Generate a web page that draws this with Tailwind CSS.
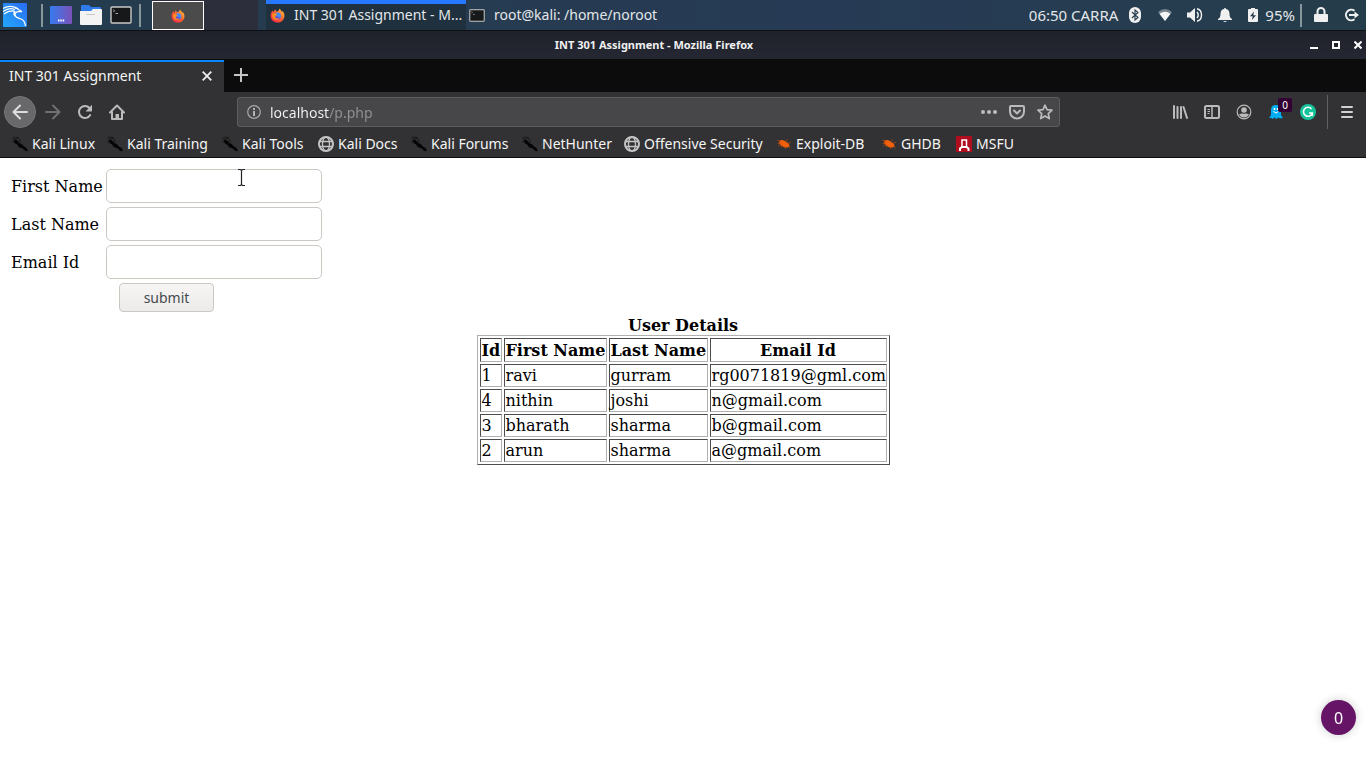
<!DOCTYPE html>
<html lang="en">
<head>
<meta charset="utf-8">
<meta name="viewport" content="width=device-width, initial-scale=1">
<title>INT 301 Assignment</title>
<script src="https://cdn.jsdelivr.net/npm/@tailwindcss/browser@4"></script>
</head>
<body class="relative flex min-h-screen flex-col bg-white font-['Noto_Sans',sans-serif] text-sm">

<svg class="absolute size-0" aria-hidden="true">
  <defs>
    <linearGradient id="fire" x1="0" y1="1" x2="1" y2="0"><stop offset="0" stop-color="#f0204e"/><stop offset=".5" stop-color="#ff5a30"/><stop offset="1" stop-color="#ffd83a"/></linearGradient>
    <linearGradient id="desk" x1="0" y1="0" x2="1" y2="0"><stop offset="0" stop-color="#367bf0"/><stop offset="1" stop-color="#7a52b8"/></linearGradient>
    <linearGradient id="kali" x1="0" y1="1" x2="1" y2="0"><stop offset="0" stop-color="#22a8fa"/><stop offset="1" stop-color="#2a6cf2"/></linearGradient>
    <symbol id="firefox" viewBox="0 0 16 16">
      <path fill="url(#fire)" d="M2.6 2.6 4 4.2 5.3 1.4 7 3.8l2-.6L10.200.6l1.700 2 1 2 .4-1.600C15 5 15.600 7 15.400 9c-.5 4-3.700 6.500-7.400 6.500C4 15.500.7 12.600.6 8.500.5 6 1.500 4.300 2.600 2.600Z"/>
      <circle cx="8" cy="8.600" r="3.700" fill="#3f8cf5"/>
      <path fill="#7047c9" d="M6 8.500c2 .3 2.400 1.500 5 1.500-1 2-4.300 2.500-5.700 1Z"/>
      <path fill="#ff8a20" d="M2.500 6C5 5 6.500 6 7.800 6.800 6.300 7.300 7 8.700 5 9.300c1 1.800 3 2.300 5 1.500-1.500 2.600-7 2.400-7.700-1.800Z"/>
    </symbol>
    <symbol id="dragon" viewBox="0 0 16 16">
      <path fill="#050505" d="M2 3.500 5 4.200l2.500 3 2.200.8 2.100 2.200 2.400 1.600 1.500 2.200-.2 1.300-2.500-.5-2.300-2.300L7 11.200 5 8.600 2.200 6.800Z"/>
      <path fill="none" stroke="#141414" stroke-width=".8" d="M0 2.200 4 1l3 1M1 4l5-2M6 2l2.500 2.500M0 5.500l3 1M7 4l1.500 3"/>
    </symbol>
    <symbol id="globe" viewBox="0 0 16 16">
      <g fill="none" stroke="#c4c4c5"><circle cx="8" cy="8" r="7" stroke-width="2"/><ellipse cx="8" cy="8" rx="3.500" ry="7" stroke-width="1.300"/><path stroke-width="1.300" d="M1 5.500h14M1 10.500h14"/></g>
    </symbol>
    <symbol id="bug" viewBox="0 0 16 16">
      <path fill="#f2600c" d="M3.500 4.500C6 3 9 4.500 11 6.500l2 1.500.5 2.500-2 1L8 11.300 5 9.500 3 7.200Z"/>
      <path stroke="#b84a10" stroke-width=".7" fill="none" d="M1 4l4 2M1.500 7.500 5 7M5 11l2-2M10 5l2-1.500M12 7l3-.5M9 11l1 2M12.500 10.500l2 1.500M2 10l3-1.500"/>
    </symbol>
    <symbol id="term" viewBox="0 0 22 18">
      <rect x="1" y="1" width="20" height="16" rx="1" fill="#171819" stroke="#c8c8c8" stroke-width="1.400"/>
      <path fill="none" stroke="#bbb" stroke-width=".9" d="m3.500 3.500 1 1.500-1 1M5.500 7.500H8"/>
    </symbol>
  </defs>
</svg>

<header class="flex h-[31px] items-center border-b border-[#0e1014] bg-[linear-gradient(90deg,#243c4d,#263c50_30%,#263a55_60%,#263d50_85%,#253c4a)] text-[#e3e7e9]">
  <button aria-label="Applications" class="ml-[3px] size-6">
    <svg viewBox="0 0 24 24" class="size-6"><rect width="24" height="24" rx="1" fill="url(#kali)"/><path fill="none" stroke="#fff" stroke-width="1.300" d="M0 5.500C5 2.500 9 2.500 14 5M0 8.500c4-3 8-3.500 12-2M1 11c3-2.500 6-3.500 10-3M12 5c2 0 3 .5 4 2l3 1.500-2-.2c-3 0-5 .5-5 3.200 0 3 3 3.500 6 4.500 3 1 4 3.500 4.500 7M12 8c-3 4 1 6 4 7.500"/></svg>
  </button>
  <span class="ml-3.5 h-[23px] w-0.5 bg-[#87959d]"></span>
  <button aria-label="Show desktop" class="ml-[7px]"><svg viewBox="0 0 22 18" class="h-[18px] w-[22px]"><rect width="22" height="18" rx="1" fill="url(#desk)"/><path stroke="#fff" stroke-width="2" stroke-dasharray="1.500 .8" d="M8 14.500h7"/></svg></button>
  <button aria-label="Files" class="ml-2"><svg viewBox="0 0 22 20" class="h-5 w-[22px]"><path fill="#2f7bec" d="M1 10V1q0-1 1-1h7l2 2h9q1 0 1 1v7Z"/><path fill="#f3f3f3" d="M0 6h11l2-2h8q1 0 1 1v14q0 1-1 1H1q-1 0-1-1Z"/><path stroke="#c8c8c8" d="M6 9.500h9"/></svg></button>
  <button aria-label="Terminal" class="ml-2"><svg class="h-[18px] w-[22px]"><use href="#term"/></svg></button>
  <span class="ml-[7px] h-[23px] w-0.5 bg-[#87959d]"></span>
  <div class="ml-[11px] flex h-full w-[106px] bg-[#2c2e3b]">
    <button aria-label="Workspace 1" class="mt-px flex h-[29px] w-[52px] items-center justify-center border border-white bg-[#4b4b4b]"><svg class="size-3.5"><use href="#firefox"/></svg></button>
  </div>
  <button class="ml-2 flex h-full w-[200px] items-center gap-[9px] border-t-4 border-[#2777ff] bg-[#1f303e] pb-1 pl-1">
    <svg class="size-[15px] shrink-0"><use href="#firefox"/></svg><span class="whitespace-nowrap">INT 301 Assignment - M...</span>
  </button>
  <button class="ml-[3px] flex items-center gap-[9px]">
    <svg class="h-[13px] w-4"><use href="#term"/></svg><span class="whitespace-nowrap">root@kali: /home/noroot</span>
  </button>
  <div class="ml-auto flex items-center pr-[7px]">
    <span class="text-[15px] leading-5 whitespace-nowrap">06:50 CARRA</span>
    <svg viewBox="0 0 12 16" class="ml-[11px] h-4 w-3"><rect width="12" height="16" rx="6" fill="#f0f0f0"/><path fill="none" stroke="#24394a" stroke-width="1.100" d="m3 5 6 5.500L6 13V3l3 2.500L3 11"/></svg>
    <svg viewBox="0 0 14 12" class="ml-[17px] h-3 w-3.5"><path fill="#75838d" d="M0 3q7-6 14 0L7 12Z"/><path fill="#f5f5f5" d="M1.500 4.800q5.500-4 11 0L7 12Z"/></svg>
    <svg viewBox="0 0 16 14" class="ml-[15px] h-3.5 w-4"><path fill="#f0f0f0" d="M0 4.500h3L8 0v14L3 9.500H0Z"/><path fill="none" stroke="#f0f0f0" stroke-width="1.400" d="M10 4q2.500 3 0 6M10 .8q4.500 1 4.500 6.200t-4.500 6.200"/></svg>
    <svg viewBox="0 0 14 14" class="ml-[15px] size-3.5"><path fill="#f0f0f0" d="M7 0q1 0 1 1 3.500.5 3.500 5 0 4 2.500 5v1H0v-1q2.500-1 2.500-5Q2.500 1.500 6 1q0-1 1-1ZM5 13h4q-2 2-4 0Z"/></svg>
    <svg viewBox="0 0 10 14" class="ml-4 h-3.5 w-2.5"><path fill="#f0f0f0" d="M0 2q0-1 1-1h2V0h4v1h2q1 0 1 1v11q0 1-1 1H1q-1 0-1-1Z"/><path fill="#24394a" d="m6 3.500-4 4.700h2.700L4 12l4-4.700H5.300Z"/></svg>
    <span class="ml-[7px] text-[15px] leading-5">95%</span>
    <span class="ml-[5px] h-[23px] w-0.5 bg-[#87959d]"></span>
    <button aria-label="Lock screen" class="ml-3"><svg viewBox="0 0 14 16" class="h-4 w-3.5"><path fill="#f0f0f0" d="M1 7h12q1 0 1 1v6q0 1-1 1H1q-1 0-1-1V8q0-1 1-1Z"/><path fill="none" stroke="#f0f0f0" stroke-width="2" d="M3.500 8V4.500a3.500 3.500 0 0 1 7 0V8"/></svg></button>
    <button aria-label="Log out" class="ml-4"><svg viewBox="0 0 15 14" class="h-3.5 w-[15px]"><path fill="none" stroke="#f0f0f0" stroke-width="2" d="M10.500 2.800a5.300 5.300 0 1 0 0 8.400M5 7h7"/><path fill="#f0f0f0" d="m10.500 3.500 4.500 3.500-4.500 3.500Z"/></svg></button>
  </div>
</header>

<div class="grid h-7 grid-cols-[1fr_auto_1fr] items-center bg-[linear-gradient(#1f222b,#252832)] text-[#f0f0f0]">
  <span></span>
  <h1 class="mr-[58px] text-[11px] font-bold whitespace-nowrap">INT 301 Assignment - Mozilla Firefox</h1>
  <div class="flex items-center justify-end gap-3.5 pr-1">
    <button aria-label="Minimize"><svg viewBox="0 0 8 8" class="size-2"><path fill="#fff" d="M0 6h8v2H0z"/></svg></button>
    <button aria-label="Maximize"><svg viewBox="0 0 8 8" class="size-2"><path fill="none" stroke="#fff" stroke-width="2" d="M1 1h6v6H1z"/></svg></button>
    <button aria-label="Close window"><svg viewBox="0 0 8 8" class="size-2"><path stroke="#fff" stroke-width="2" d="m.5.5 7 7m0-7-7 7"/></svg></button>
  </div>
</div>

<div class="flex h-[33px] bg-[#0c0c0d] text-[#f5f5f5]">
  <div class="mt-px flex w-56 items-center justify-between border-t-2 border-[#0a84ff] bg-[#323234] pr-3 pb-0.5 pl-[9px]">
    <span>INT 301 Assignment</span>
    <button aria-label="Close tab"><svg viewBox="0 0 10 10" class="size-2.5"><path stroke="#eee" stroke-width="1.800" d="m.7.7 8.600 8.600m0-8.600L.7 9.300"/></svg></button>
  </div>
  <button aria-label="New tab" class="ml-2.5 pb-0.5"><svg viewBox="0 0 14 14" class="size-3.5"><path stroke="#c6c6c7" stroke-width="2" d="M7 0v14M0 7h14"/></svg></button>
</div>

<nav class="flex h-10 items-center bg-[#323234] text-[#bbbbbc]" aria-label="Navigation">
  <button aria-label="Back" class="ml-1 flex size-8 items-center justify-center rounded-full border border-[#767677] bg-[#68686a]"><svg viewBox="0 0 16 16" class="size-4"><path fill="none" stroke="#dddddd" stroke-width="2" stroke-linecap="round" stroke-linejoin="round" d="M15 8H2m6-6.500L1.500 8 8 14.500"/></svg></button>
  <button aria-label="Forward" class="ml-[9px]"><svg viewBox="0 0 16 16" class="size-4"><path fill="none" stroke="#707071" stroke-width="2" stroke-linecap="round" stroke-linejoin="round" d="M1 8h13M8 1.500 14.500 8 8 14.500"/></svg></button>
  <button aria-label="Reload" class="ml-4"><svg viewBox="0 0 16 16" class="size-4"><path fill="none" stroke="currentColor" stroke-width="2" stroke-linecap="round" d="M12.500 4A6 6 0 1 0 13.200 11"/><path fill="currentColor" d="M15 .8v6q0 .7-.7.7H8.500Z"/></svg></button>
  <button aria-label="Home" class="ml-4"><svg viewBox="0 0 16 16" class="size-4"><path fill="none" stroke="currentColor" stroke-width="2" stroke-linecap="round" stroke-linejoin="round" d="M1 8.500 8 1.500l7 7M3 7.500V15h10V7.500"/><path fill="currentColor" d="M6.500 15v-5h3.500v5Z"/></svg></button>
  <div class="ml-28 flex h-[30px] w-[823px] min-w-0 items-center rounded-[3px] border border-[#5d5d5f] bg-[#474749] pr-1.5 pl-[9px]">
    <svg viewBox="0 0 14 14" class="size-3.5 shrink-0"><circle cx="7" cy="7" r="6.300" fill="none" stroke="#a9a9aa" stroke-width="1.200"/><path fill="#b3b3b4" d="M6 3h2v2H6zM6 6h2v5H6z"/></svg>
    <input aria-label="Address" type="text" value="localhost/p.php" class="ml-[9px] min-w-0 flex-1 bg-[linear-gradient(90deg,#f5f5f5_59px,#929293_59px)] bg-clip-text pt-0.5 text-transparent outline-none">
    <button aria-label="Page actions"><svg viewBox="0 0 16 16" class="size-4" fill="currentColor"><circle cx="2" cy="8" r="2"/><circle cx="8" cy="8" r="2"/><circle cx="14" cy="8" r="2"/></svg></button>
    <button aria-label="Save to Pocket" class="ml-3"><svg viewBox="0 0 16 16" class="size-4"><path fill="none" stroke="currentColor" stroke-width="2" stroke-linejoin="round" d="M2 2h12q1 0 1 1v4.500a7 7 0 0 1-14 0V3q0-1 1-1Z"/><path fill="none" stroke="currentColor" stroke-width="2" stroke-linecap="round" stroke-linejoin="round" d="m5 6.500 3 3 3-3"/></svg></button>
    <button aria-label="Bookmark this page" class="ml-3"><svg viewBox="0 0 16 16" class="size-4"><path fill="none" stroke="currentColor" stroke-width="1.700" stroke-linejoin="round" d="m8 1.200 2 4.500 5 .5-3.700 3.400 1 5L8 12l-4.300 2.600 1-5L1 6.200l5-.5Z"/></svg></button>
  </div>
  <div class="ml-auto flex h-full items-center">
    <button aria-label="Library"><svg viewBox="0 0 16 16" class="size-4"><path fill="none" stroke="currentColor" stroke-width="2" stroke-linecap="round" d="M2 2v12M5.500 3v11M9 3v11M11.500 3 15 14" /></svg></button>
    <button aria-label="Sidebars" class="ml-4"><svg viewBox="0 0 16 16" class="size-4"><rect x="1" y="2" width="14" height="12" rx="1.500" fill="none" stroke="currentColor" stroke-width="2"/><path stroke="currentColor" stroke-width="1.500" d="M8 2v12"/><path stroke="currentColor" d="M3.500 5.500H6M3.500 7.500H6M3.500 9.500H5.500"/></svg></button>
    <button aria-label="Account" class="ml-4"><svg viewBox="0 0 16 16" class="size-4"><circle cx="8" cy="8" r="6.800" fill="none" stroke="currentColor" stroke-width="1.200"/><circle cx="8" cy="6" r="2.800" fill="currentColor"/><path fill="currentColor" d="M3 10q2 .3 3-.7 2 1 4 0 1 1 3 .7-1.500 3.500-5 3.500T3 10Z"/></svg></button>
    <button aria-label="Ghostery" class="relative ml-4"><svg viewBox="0 0 16 16" class="size-4"><path fill="#00aef0" d="M3 6q0-5 5-5t5 5v5l2 3-3 .5-1.500-1L8.500 15l-2-1.500-2 1.500-1-1-2.500 0 2-3Z"/><circle cx="6.500" cy="5" r="1" fill="#fff"/><circle cx="9.700" cy="5" r="1" fill="#fff"/><path fill="none" stroke="#fff" d="M5.500 7.500q2.500 3 5 0"/></svg><span class="absolute -top-1.5 left-2.5 h-3.5 w-3.5 rounded-[2px] bg-[#330033] text-center text-[10px] leading-[14px] text-white">0</span></button>
    <button aria-label="Grammarly" class="ml-4"><svg viewBox="0 0 16 16" class="size-4"><circle cx="8" cy="8" r="8" fill="#15c39a"/><path fill="none" stroke="#fff" stroke-width="1.600" d="M11.500 5A4.500 4.500 0 1 0 12.300 9H9m3.300-.5V12"/></svg></button>
    <span class="ml-[11px] h-[34px] w-px bg-[#606062]"></span>
    <button aria-label="Open menu" class="mr-3 ml-3"><svg viewBox="0 0 14 14" class="h-3.5 w-3.5"><path stroke="#d0d0d0" stroke-width="2" stroke-linecap="round" d="M2 2h10M2 7h10M2 12h10"/></svg></button>
  </div>
</nav>

<nav class="grid h-[26px] grid-cols-[95px_115px_96px_93px_111px_102px_152px_105px_75px_auto] border-b border-[#0c0c0d] bg-[#323234] pb-0.5 pl-3 whitespace-nowrap text-[#f5f5f5]" aria-label="Bookmarks">
  <a href="#" class="flex items-center gap-1"><svg class="size-4"><use href="#dragon"/></svg>Kali Linux</a>
  <a href="#" class="flex items-center gap-1"><svg class="size-4"><use href="#dragon"/></svg>Kali Training</a>
  <a href="#" class="flex items-center gap-1"><svg class="size-4"><use href="#dragon"/></svg>Kali Tools</a>
  <a href="#" class="flex items-center gap-1"><svg class="size-4"><use href="#globe"/></svg>Kali Docs</a>
  <a href="#" class="flex items-center gap-1"><svg class="size-4"><use href="#dragon"/></svg>Kali Forums</a>
  <a href="#" class="flex items-center gap-1"><svg class="size-4"><use href="#dragon"/></svg>NetHunter</a>
  <a href="#" class="flex items-center gap-1"><svg class="size-4"><use href="#globe"/></svg>Offensive Security</a>
  <a href="#" class="flex items-center gap-1"><svg class="size-4"><use href="#bug"/></svg>Exploit-DB</a>
  <a href="#" class="flex items-center gap-1"><svg class="size-4"><use href="#bug"/></svg>GHDB</a>
  <a href="#" class="flex items-center gap-1 justify-self-start"><svg viewBox="0 0 16 16" class="size-4"><rect width="16" height="16" fill="#b00d1e"/><path fill="none" stroke="#fff" stroke-width="1.500" d="M6 11V4h4.500v7"/><path fill="none" stroke="#fff" stroke-width="2" d="M4 15v-2.500l2-1.500h4.500l2 1.500V15"/></svg>MSFU</a>
</nav>

<main class="flex-1 px-2 pt-2 font-['DejaVu_Serif',serif] text-base leading-[19px] text-black">
  <form>
    <table class="w-[317px] table-fixed border-separate border-spacing-0.5 whitespace-nowrap">
      <colgroup><col class="w-[93px]"><col></colgroup>
      <tr><td class="p-px"><label for="first">First Name</label></td><td class="p-px"><input id="first" type="text" class="block h-[34px] w-[216px] rounded-[5px] border border-[#cdc7c2] px-2 outline-none"></td></tr>
      <tr><td class="p-px"><label for="last">Last Name</label></td><td class="p-px"><input id="last" type="text" class="block h-[34px] w-[216px] rounded-[5px] border border-[#cdc7c2] px-2 outline-none"></td></tr>
      <tr><td class="p-px"><label for="email">Email Id</label></td><td class="p-px"><input id="email" type="text" class="block h-[34px] w-[216px] rounded-[5px] border border-[#cdc7c2] px-2 outline-none"></td></tr>
    </table>
    <button type="button" class="mt-px ml-[111px] block h-[29px] w-[95px] rounded-[4px] border border-[#cdc7c2] bg-[linear-gradient(#f6f5f4,#edebe9)] font-['Noto_Sans',sans-serif] text-sm text-[#444b4e]">submit</button>
  </form>
  <table class="mx-auto mt-1 w-[413px] table-fixed border-separate border-spacing-0.5 border border-t-[#b0b0b0] border-r-[#4c4c4c] border-b-[#4c4c4c] border-l-[#b0b0b0] whitespace-nowrap [&_td]:border [&_td]:border-t-[#4c4c4c] [&_td]:border-r-[#b0b0b0] [&_td]:border-b-[#b0b0b0] [&_td]:border-l-[#4c4c4c] [&_td]:p-px [&_th]:border [&_th]:border-t-[#4c4c4c] [&_th]:border-r-[#b0b0b0] [&_th]:border-b-[#b0b0b0] [&_th]:border-l-[#4c4c4c] [&_th]:p-px">
    <caption class="font-bold">User Details</caption>
    <colgroup><col class="w-[22px]"><col class="w-[103px]"><col class="w-[99px]"><col class="w-[177px]"></colgroup>
    <thead><tr class="h-6"><th>Id</th><th>First Name</th><th>Last Name</th><th>Email Id</th></tr></thead>
    <tbody>
      <tr><td>1</td><td>ravi</td><td>gurram</td><td>rg0071819@gml.com</td></tr>
      <tr><td>4</td><td>nithin</td><td>joshi</td><td>n@gmail.com</td></tr>
      <tr><td>3</td><td>bharath</td><td>sharma</td><td>b@gmail.com</td></tr>
      <tr><td>2</td><td>arun</td><td>sharma</td><td>a@gmail.com</td></tr>
    </tbody>
  </table>
</main>

<svg viewBox="0 0 9 19" class="pointer-events-none absolute top-[168px] left-[237px] h-[19px] w-[9px]" aria-hidden="true"><path fill="none" stroke="#fff" stroke-width="3" d="M1 1.500h7M4.500 2v15M1 17.500h7"/><path fill="none" stroke="#222" stroke-width="1.200" d="M1 1.500h2.500l1 1 1-1H8M4.500 2v15M1 17.500h2.500l1-1 1 1H8"/></svg>
<button aria-label="Trackers found: 0" class="fixed right-[10px] bottom-[33px] size-[35px] rounded-full bg-[#661566] text-base text-white shadow-[0_0_10px_rgba(0,0,0,0.2)]">0</button>

</body>
</html>
